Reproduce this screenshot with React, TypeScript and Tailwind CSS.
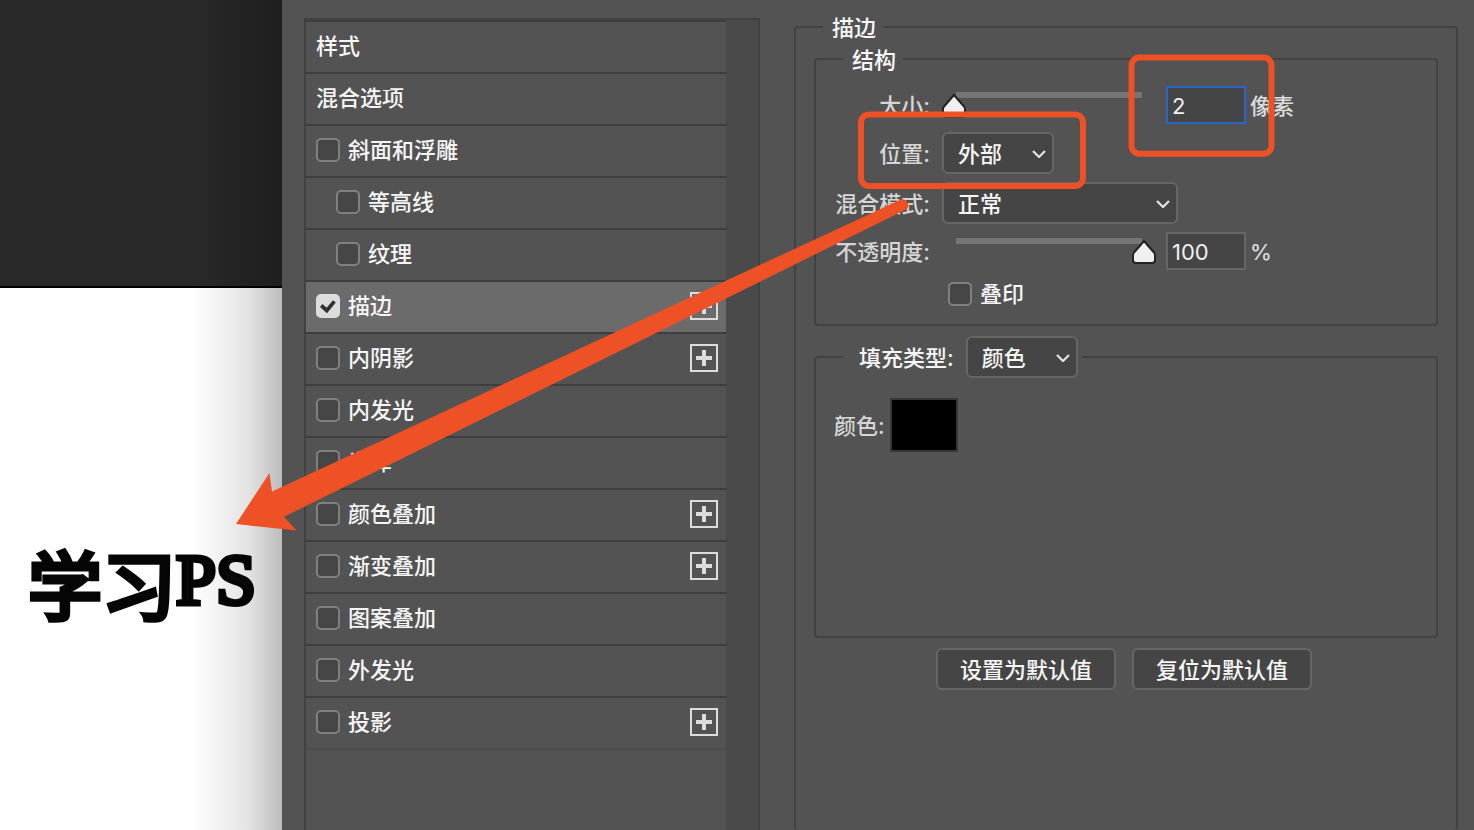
import { useState, type ReactNode } from 'react';

type Effect = {
  id: string;
  label: string;
  checkbox?: boolean;
  indent?: boolean;
  checked?: boolean;
  addable?: boolean;
};

const EFFECTS: Effect[] = [
  { id: 'styles', label: '样式' },
  { id: 'blending', label: '混合选项' },
  { id: 'bevel', label: '斜面和浮雕', checkbox: true },
  { id: 'contour', label: '等高线', checkbox: true, indent: true },
  { id: 'texture', label: '纹理', checkbox: true, indent: true },
  { id: 'stroke', label: '描边', checkbox: true, checked: true, addable: true },
  { id: 'inner-shadow', label: '内阴影', checkbox: true, addable: true },
  { id: 'inner-glow', label: '内发光', checkbox: true },
  { id: 'satin', label: '光泽', checkbox: true },
  { id: 'color-overlay', label: '颜色叠加', checkbox: true, addable: true },
  { id: 'gradient-overlay', label: '渐变叠加', checkbox: true, addable: true },
  { id: 'pattern-overlay', label: '图案叠加', checkbox: true },
  { id: 'outer-glow', label: '外发光', checkbox: true },
  { id: 'drop-shadow', label: '投影', checkbox: true, addable: true },
];

function Checkbox({ id, defaultChecked }: { id: string; defaultChecked?: boolean }) {
  return (
    <span className="grid size-6 shrink-0">
      <input
        id={id}
        type="checkbox"
        defaultChecked={defaultChecked}
        className="peer col-start-1 row-start-1 size-6 appearance-none rounded-[5px] border-2 border-[#808080] bg-[#464646] checked:border-[#dcdcdc] checked:bg-[#dcdcdc]"
      />
      <svg
        viewBox="0 0 24 24"
        className="pointer-events-none invisible col-start-1 row-start-1 size-6 peer-checked:visible"
        aria-hidden="true"
      >
        <path d="M5.2 11.5 L10.8 16.5 L18.4 7.4" fill="none" stroke="#303030" strokeWidth="3.7" />
      </svg>
    </span>
  );
}

function Select({ id, value, options, wide }: { id: string; value: string; options: string[]; wide?: boolean }) {
  return (
    <span className={wide ? 'relative block w-[236px]' : 'relative block w-28'}>
      <select
        id={id}
        defaultValue={value}
        className="block h-[42px] w-full appearance-none rounded-md border-2 border-[#666666] bg-[#454545] pt-0.5 pl-3.5 pr-8 font-medium text-[#f6f6f6]"
      >
        {options.map((o) => (
          <option key={o}>{o}</option>
        ))}
      </select>
      <svg viewBox="0 0 14 10" className="pointer-events-none absolute right-2 top-4 h-2.5 w-3.5" aria-hidden="true">
        <path d="M1 3 L7 9 L13 3" fill="none" stroke="#e4e4e4" strokeWidth="2.2" />
      </svg>
    </span>
  );
}

function SliderField({
  id,
  label,
  unit,
  initial,
  max,
  focused,
}: {
  id: string;
  label: string;
  unit: string;
  initial: number;
  max: number;
  focused?: boolean;
}) {
  const [value, setValue] = useState(initial);
  const ratio = focused ? Math.max(0, value - initial) / max : value / max;
  return (
    <Row label={label} htmlFor={id}>
      <span className="relative block h-[38px] w-[214px]">
        <span className="absolute left-3.5 right-3.5 top-1.5 block h-1.5 bg-[#757575]" />
        <span className="absolute left-0 right-6 top-2 block">
          <svg
            viewBox="0 0 24 24"
            className="absolute top-0 size-6"
            style={{ left: `${ratio * 100}%` }}
            aria-hidden="true"
          >
            <path
              d="M12 1 L22 12.5 Q23 13.8 23 15.5 V20 Q23 23 20 23 H4 Q1 23 1 20 V15.5 Q1 13.8 2 12.5 Z"
              fill="#f0f0f0"
              stroke="#222222"
              strokeWidth="2"
            />
          </svg>
        </span>
        <input
          type="range"
          aria-label={label}
          min={0}
          max={max}
          value={value}
          onChange={(e) => setValue(Number(e.target.value))}
          className="absolute inset-0 h-full w-full opacity-0"
        />
      </span>
      <input
        id={id}
        type="text"
        value={value}
        onChange={(e) => setValue(Number(e.target.value) || 0)}
        className={
          focused
            ? 'ml-2.5 h-[38px] w-20 border-2 border-[#2b64c9] bg-[#454545] pt-0.5 pl-1 text-[#f0f0f0] outline-none'
            : 'ml-2.5 h-[38px] w-20 border-2 border-[#666666] bg-[#454545] pt-0.5 pl-1 text-[#f0f0f0] outline-none'
        }
      />
      <span className="ml-1 pt-0.5 font-medium text-[#dcdcdc]">{unit}</span>
    </Row>
  );
}

function Row({ label, htmlFor, children }: { label: string; htmlFor: string; children: ReactNode }) {
  return (
    <div className="flex items-center">
      <label htmlFor={htmlFor} className="mr-3 w-[114px] shrink-0 pt-0.5 text-right font-medium text-[#d6d6d6]">
        {label}
      </label>
      {children}
    </div>
  );
}

function EffectList() {
  return (
    <section className="flex w-[456px] shrink-0 border-2 border-b-0 border-[#424242]">
      <ul className="min-w-0 flex-1">
        {EFFECTS.map((e) => (
          <li
            key={e.id}
            className={
              e.checked
                ? 'flex h-[52px] items-center border-t-2 border-[#3e3e3e] bg-[#6b6b6b] pr-2 pb-0.5 pl-2.5'
                : e.indent
                  ? 'flex h-[52px] items-center border-t-2 border-[#3e3e3e] pr-2 pb-0.5 pl-[30px]'
                  : 'flex h-[52px] items-center border-t-2 border-[#3e3e3e] pr-2 pb-0.5 pl-2.5'
            }
          >
            {e.checkbox ? (
              <>
                <Checkbox id={e.id} defaultChecked={e.checked} />
                <label htmlFor={e.id} className="ml-2 font-medium text-[#f6f6f6]">
                  {e.label}
                </label>
              </>
            ) : (
              <a href={`#${e.id}`} className="font-medium text-[#f6f6f6]">
                {e.label}
              </a>
            )}
            {e.addable && (
              <button
                type="button"
                aria-label={`添加${e.label}`}
                className="ml-auto flex size-7 items-center justify-center border-2 border-[#dcdcdc]"
              >
                <svg viewBox="0 0 16 16" className="size-4" aria-hidden="true">
                  <path d="M8 0 V16 M0 8 H16" stroke="#dcdcdc" strokeWidth="4" />
                </svg>
              </button>
            )}
          </li>
        ))}
        <li className="border-t-2 border-[#4b4b4b]" aria-hidden="true" />
      </ul>
      <div className="w-8 bg-[#4a4a4a]" />
    </section>
  );
}

function StrokePanel() {
  return (
    <fieldset className="ml-[34px] mt-[-7px] min-w-0 flex-1 rounded-sm border-2 border-b-0 border-[#424242] px-[18px]">
      <legend className="ml-[9px] pl-[9px] pr-[7px] pt-0.5 font-medium leading-[30px] text-[#f6f6f6]">描边</legend>

      <fieldset className="min-w-0 rounded-sm border-2 border-[#424242] pb-[18px]">
        <legend className="ml-[27px] pl-[9px] pr-[7px] pt-0.5 font-medium leading-[30px] text-[#f6f6f6]">结构</legend>
        <div className="flex flex-col gap-2 pt-[11px]">
          <SliderField id="size" label="大小:" unit="像素" initial={2} max={250} focused />
          <Row label="位置:" htmlFor="position">
            <Select id="position" value="外部" options={['外部', '内部', '居中']} />
          </Row>
          <Row label="混合模式:" htmlFor="mode">
            <Select id="mode" value="正常" options={['正常', '溶解', '变暗']} wide />
          </Row>
          <SliderField id="opacity" label="不透明度:" unit="%" initial={100} max={100} />
        </div>
        <div className="flex items-center pl-[132px] pt-3">
          <Checkbox id="overprint" />
          <label htmlFor="overprint" className="ml-2 h-6 leading-6 font-medium text-[#f6f6f6]">
            叠印
          </label>
        </div>
      </fieldset>

      <fieldset className="mt-2.5 h-[302px] min-w-0 rounded-sm border-2 border-[#424242]">
        <legend className="ml-[27px] pl-4 pr-1">
          <span className="flex items-center gap-3">
            <label htmlFor="fill-type" className="pt-0.5 font-medium text-[#f6f6f6]">
              填充类型:
            </label>
            <Select id="fill-type" value="颜色" options={['颜色', '渐变', '图案']} />
          </span>
        </legend>
        <div className="flex items-center gap-1.5 pl-[18px] pt-5">
          <label htmlFor="color" className="w-[50px] pt-0.5 whitespace-nowrap font-medium text-[#d6d6d6]">
            颜色:
          </label>
          <button
            id="color"
            type="button"
            aria-label="颜色"
            className="h-[54px] w-[68px] border-2 border-[#373737] bg-black"
          />
        </div>
      </fieldset>

      <div className="mt-2.5 flex justify-center gap-4 pr-1">
        {['设置为默认值', '复位为默认值'].map((t) => (
          <button
            key={t}
            type="button"
            className="h-[42px] w-[180px] rounded-md border-2 border-[#666666] bg-[#454545] pt-0.5 font-medium text-[#f6f6f6]"
          >
            {t}
          </button>
        ))}
      </div>
    </fieldset>
  );
}

function Annotations() {
  return (
    <svg className="pointer-events-none absolute left-0 top-0 h-[830px] w-[1474px]" viewBox="0 0 1474 830" aria-hidden="true">
      <g fill="none" stroke="#ee5126" strokeWidth="6">
        <rect x="861" y="114.5" width="222" height="71.5" rx="8" />
        <rect x="1131.5" y="57.5" width="140" height="96.3" rx="8" />
      </g>
      <path
        d="M236 524 L269.5 473 L272 491.5 L901.5 199.3 A6 6 0 0 1 907 209 L284 516.8 L296.5 530.5 Z"
        fill="#ee5126"
      />
    </svg>
  );
}

export default function App() {
  return (
    <div className="relative flex min-h-screen overflow-hidden bg-[#535353] font-['Noto_Sans','Noto_Sans_CJK_SC',sans-serif] text-[22px] leading-8">
      <aside className="flex w-[282px] shrink-0 flex-col">
        <div className="h-[288px] border-b-2 border-black bg-gradient-to-r from-[#282828] from-70% to-[#1e1e1e]" />
        <div className="flex-1 bg-gradient-to-r from-white from-68% via-[#e4e4e4] via-88% to-[#bcbcbc] pl-7 pt-[250px]">
          <p className="flex whitespace-nowrap text-[74px] leading-[88px] text-[#0a0a0a] [-webkit-text-stroke:5px_#050505]">
            <span className="font-['Noto_Sans_CJK_SC',sans-serif]">学习</span>
            <span className="font-['Liberation_Serif',serif] text-[72px] leading-[84px]">PS</span>
          </p>
        </div>
      </aside>
      <main className="flex min-w-0 flex-1 pl-[22px] pr-4 pt-[18px] font-['Inter','Noto_Sans_CJK_SC',sans-serif]">
        <EffectList />
        <StrokePanel />
      </main>
      <Annotations />
    </div>
  );
}
